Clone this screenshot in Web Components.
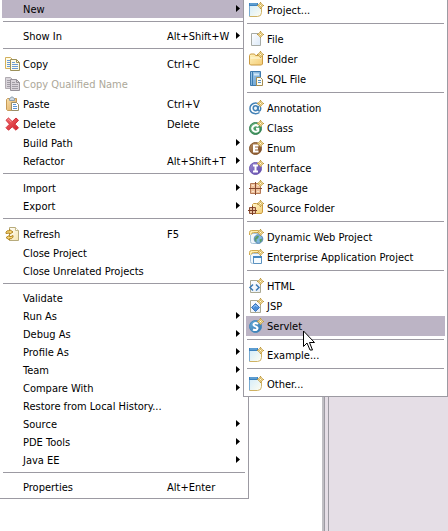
<!DOCTYPE html>
<html lang="en">
<head>
<meta charset="utf-8">
<title>Context menu</title>
<style>
html, body { height: 100%; }
body { margin: 0; overflow: hidden; background: #fff; color: #000; font: 11px/18px "DejaVu Sans Condensed", Tahoma, "Noto Sans", sans-serif; }
</style>
</head>
<body>
<ide-workbench>
  <popup-menu label="Project">
    <menu-entry label="New" submenu active></menu-entry>
    <menu-divider></menu-divider>
    <menu-entry label="Show In" keys="Alt+Shift+W" submenu></menu-entry>
    <menu-divider></menu-divider>
    <menu-entry label="Copy" keys="Ctrl+C" icon="copy"></menu-entry>
    <menu-entry label="Copy Qualified Name" icon="copyOff" disabled></menu-entry>
    <menu-entry label="Paste" keys="Ctrl+V" icon="paste"></menu-entry>
    <menu-entry label="Delete" keys="Delete" icon="delete"></menu-entry>
    <menu-entry label="Build Path" submenu></menu-entry>
    <menu-entry label="Refactor" keys="Alt+Shift+T" submenu></menu-entry>
    <menu-divider></menu-divider>
    <menu-entry label="Import" submenu></menu-entry>
    <menu-entry label="Export" submenu></menu-entry>
    <menu-divider></menu-divider>
    <menu-entry label="Refresh" keys="F5" icon="refresh"></menu-entry>
    <menu-entry label="Close Project"></menu-entry>
    <menu-entry label="Close Unrelated Projects"></menu-entry>
    <menu-divider></menu-divider>
    <menu-entry label="Validate"></menu-entry>
    <menu-entry label="Run As" submenu></menu-entry>
    <menu-entry label="Debug As" submenu></menu-entry>
    <menu-entry label="Profile As" submenu></menu-entry>
    <menu-entry label="Team" submenu></menu-entry>
    <menu-entry label="Compare With" submenu></menu-entry>
    <menu-entry label="Restore from Local History..."></menu-entry>
    <menu-entry label="Source" submenu></menu-entry>
    <menu-entry label="PDE Tools" submenu></menu-entry>
    <menu-entry label="Java EE" submenu></menu-entry>
    <menu-divider></menu-divider>
    <menu-entry label="Properties" keys="Alt+Enter"></menu-entry>
  </popup-menu>
  <popup-menu slot="submenu" label="New" cascade>
    <menu-entry label="Project..." icon="wizard"></menu-entry>
    <menu-divider></menu-divider>
    <menu-entry label="File" icon="file"></menu-entry>
    <menu-entry label="Folder" icon="folder"></menu-entry>
    <menu-entry label="SQL File" icon="sql"></menu-entry>
    <menu-divider></menu-divider>
    <menu-entry label="Annotation" icon="annotation"></menu-entry>
    <menu-entry label="Class" icon="class"></menu-entry>
    <menu-entry label="Enum" icon="enum"></menu-entry>
    <menu-entry label="Interface" icon="interface"></menu-entry>
    <menu-entry label="Package" icon="package"></menu-entry>
    <menu-entry label="Source Folder" icon="source"></menu-entry>
    <menu-divider></menu-divider>
    <menu-entry label="Dynamic Web Project" icon="web"></menu-entry>
    <menu-entry label="Enterprise Application Project" icon="ear"></menu-entry>
    <menu-divider></menu-divider>
    <menu-entry label="HTML" icon="html"></menu-entry>
    <menu-entry label="JSP" icon="jsp"></menu-entry>
    <menu-entry label="Servlet" icon="servlet" active pointer></menu-entry>
    <menu-divider></menu-divider>
    <menu-entry label="Example..." icon="wizard"></menu-entry>
    <menu-divider></menu-divider>
    <menu-entry label="Other..." icon="wizard"></menu-entry>
  </popup-menu>
</ide-workbench>
<script>
const spark = '<path d="M11.5 0v7M8 3.5h7" stroke="#b8923a"/><path d="M11.5.8l2.700 2.700-2.700 2.700L8.800 3.500z" fill="#fff3c4" stroke="#c19a3f"/><path d="M11.500 2v3M10 3.500h3" stroke="#dcbc62"/><path d="M11 3h1v1h-1z" fill="#fffbe8"/>';
const grad = (id, a, b) => `<defs><linearGradient id="${id}" x1="0" y1="0" x2="1" y2="1"><stop offset="0" stop-color="${a}"/><stop offset="1" stop-color="${b}"/></linearGradient></defs>`;
const page = '<path d="M1.500 2.500h7l3 3v9h-10z" fill="url(#g)" stroke="#aaa994"/>';
const disc = (a, b, s) => grad('g', a, b) + `<circle cx="6.500" cy="8.500" r="6" fill="url(#g)" stroke="${s}"/>`;
const bin = '<path d="M1.500 4.500h10v8q0 2-2 2h-6q-2 0-2-2z" fill="#f0f7fc" stroke="#a8c3d9"/><path d="M.5 6V3.500q0-2 2-2h7v2h-5q-2 0-2 2" fill="#ffefb0" stroke="#d0ab4f"/>';
const copy = (a, b, l, f) => `<path d="M.5 1.500h5l3 3v8h-8z" fill="${f}" stroke="${a}"/><path d="M2 4.500h3M2 6.500h3M2 8.500h3M2 10.500h3" stroke="${l}"/><path d="M5.500 3.500h6l3 3v8h-9z" fill="${f}" stroke="${b}"/><path d="M11.500 3.500v3h3" fill="none" stroke="${b}"/><path d="M7 6.500h3M7 8.500h6M7 10.500h6M7 12.500h6" stroke="${l}"/>`;
const ICONS = {
  copy: copy('#d2b05c', '#9c915a', '#6b9bd6', '#fffbe6'),
  copyOff: copy('#b0abb1', '#979299', '#a19da5', '#d9d4da'),
  paste: grad('g', '#f9e0ab', '#dfa95c') + '<path d="M2.500 2.500h9v12h-9l-1-1v-10z" fill="url(#g)" stroke="#c69a57"/><path d="M4.500 4.500v-2l1.500-1q1-1.500 2 0l1.500 1v2z" fill="#cfdae3" stroke="#8c9dac"/><path d="M6.500 6.500h5l2 2v6h-7z" fill="#fff" stroke="#9a8e68"/><path d="M8 8.500h3M8 10.500h4M8 12.500h4" stroke="#5f95d4"/>',
  delete: grad('g', '#f56a6a', '#cf1f2c') + '<path d="M3.500 2L7.200 5.600 11 2l2.500 2.300-3.600 3.900 3.600 3.500L11 14.200l-3.800-3.400-3.700 3.400L1 11.700l3.500-3.500L1 4.300z" fill="url(#g)" stroke="#d0303a" stroke-linejoin="round"/><path d="M2.500 4.200l1-1 3 3" fill="none" stroke="#ff9c9c"/>',
  refresh: grad('g', '#ffffff', '#f6e4ac') + '<path d="M4.500 1.500h6l3 3v10h-9z" fill="url(#g)" stroke="#b7ab7c"/><path d="M10.500 1.500v3h3" fill="#fff" stroke="#c5b988"/><path d="M1 7.500V6.300l1.200-1.500H4.500V3.500L8 6 4.500 8.300V7zM8 9.500v1.600l-1.500 1.600H4.500V14L1 11.600 4.500 9.300v1.200H6z" fill="#f8d676" stroke="#b08320"/>',
  wizard: grad('g', '#d3ecfb', '#fffdf0') + '<path d="M.5 2.500h12v8l-4 4h-8z" fill="url(#g)"/><path d="M.5 2v12.500" stroke="#79abd2"/><path d="M.5 14.500H8.500q4 0 4-4V5" fill="none" stroke="#cfb263"/><path d="M0 1h9v3H0z" fill="#3c82bf"/><path d="M1 2h7" stroke="#7fb8e2"/>' + spark,
  file: grad('g', '#fff', '#dae8f8') + '<path d="M2.500 2.500h7l2 2v10h-9z" fill="url(#g)" stroke="#a7aba6"/>' + spark,
  folder: grad('g', '#fff4bf', '#f4cb74') + '<path d="M.5 13V4.500l1-1.500h4l1 1.500h7V13l-1 1H1.500z" fill="url(#g)" stroke="#cb9b42"/><path d="M1.500 7h11" stroke="#fffbe1"/>' + spark,
  sql: grad('g', '#a4cbea', '#639dcd') + '<path d="M1.500.5h10v14h-10z" fill="url(#g)" stroke="#3d7aae"/><path d="M3.500 1v13" stroke="#3c7cb1"/><path d="M5 2.500h5v2H5z" fill="#d3e9f8"/><path d="M7.500 6.500h4l2 2v6h-6z" fill="#fffef4" stroke="#a58c4f"/><path d="M9 9.500h3M9 11.500h3" stroke="#5b92c8"/>',
  annotation: '<path d="M10.500 12.500C7 15 1 13.500 1 8.500S7 1.500 10 4.500s1.500 8-.8 6V6" fill="none" stroke="#4482b6" stroke-width="1.500"/><ellipse cx="6.500" cy="8.300" rx="2.300" ry="2.500" fill="#eaf5fc" stroke="#4482b6" stroke-width="1.500"/>' + spark,
  class: disc('#6fb886', '#2a8149', '#3a8559') + '<path d="M9.500 6.200Q6.500 4 4.300 6.300t0 4.500q2.500 2 5 0V8.800H7" fill="none" stroke="#fff" stroke-width="2"/>' + spark,
  enum: disc('#b38a5d', '#7d491f', '#89592f') + '<path d="M9.500 5.500H5v6h4.500M5 8.500h4" fill="none" stroke="#fff" stroke-width="2"/>' + spark,
  interface: disc('#9a8ad2', '#5f48a8', '#705bb3') + '<path d="M4 5.500h5M6.500 5.500v6M4 11.500h5" fill="none" stroke="#fff" stroke-width="2"/>' + spark,
  package: '<path d="M1.500 3.500h10v10h-10z" fill="#eec29c" stroke="#b57a58"/><path d="M0 8.500h13M6.500 2v13" stroke="#874a30"/><path d="M3 5.500h2M8 5.500h2M3 11.500h2M8 11.500h2" stroke="#fae3cd"/>' + spark,
  source: grad('g', '#fff5cb', '#f4cf75') + '<path d="M3.500 12V4.500l1-1h3l1 1h5V12l-1 1.500h-9z" fill="url(#g)" stroke="#cb9b42"/><path d="M.5 7.500h6v6h-6z" fill="#eac4a4" stroke="#8b4d32"/><path d="M-1 10.500h9M3.500 6v9" stroke="#7a3b24"/>' + spark,
  web: bin + '<circle cx="9.500" cy="10" r="4.300" fill="#7fb7e0" stroke="#5585b0"/><path d="M6 9q2-3 4-2l-1 2.500-1.500.5v3q-2-1-1.500-3.500M10.500 10.500l2.500-1q.5 2.500-2 4z" fill="#5b9c62"/>' + spark,
  ear: bin + '<path d="M4.500 7.500h8v7h-8z" fill="#f5fbff" stroke="#5b92c0"/><path d="M4 8h9" stroke="#4688c1" stroke-width="2"/>' + spark,
  html: grad('g', '#fff', '#e5eff8') + page + '<path d="M4 6.500L1 9.500l3 3M7 6.500l3 3-3 3" fill="none" stroke="#3c79b4" stroke-width="1.500"/>' + spark,
  jsp: grad('g', '#fff', '#e5eff8') + page + '<path d="M6.500 5.500l4 4-4 4-4-4z" fill="#4b8fd8" stroke="#3c74bb"/><path d="M4.300 9.200L6.500 7l2 2" fill="none" stroke="#a9d3fa"/>' + spark,
  servlet: disc('#68add9', '#2f73ae', '#4389bd') + '<path d="M9 6Q6.500 4.200 5 5.700t1.500 2.700 1.500 2.800-4 .3" fill="none" stroke="#fff" stroke-width="2"/>' + spark
};

class IdeWorkbench extends HTMLElement {
  connectedCallback() {
    this.attachShadow({mode: 'open'}).innerHTML = `<style>
      :host { position: relative; display: grid; min-height: 100vh; grid-template-columns: 322px 3px 3px 1fr; }
      .sash { background: #c0bfc4; border-right: 1px solid #9c9aa2; box-sizing: border-box; }
      .gap, .editor { background: #e5dee6; }
      .editor { border-left: 1px solid #9c9aa2; }
      ::slotted([slot=submenu]) { position: absolute; left: 243px; right: 0; top: 0; }
    </style><main><slot></slot></main><div class="sash"></div><div class="gap"></div><div class="editor"></div><slot name="submenu"></slot>`;
  }
}

class PopupMenu extends HTMLElement {
  connectedCallback() {
    this.attachShadow({mode: 'open'}).innerHTML = `<style>
      :host { display: block; box-sizing: border-box; max-width: 249px; padding: 0 2px 2px; background: #fff; border: solid #9c9aa2; border-width: 0 1px 1px 0; }
      :host([cascade]) { max-width: none; border-left-width: 1px; }
      div { display: flex; flex-direction: column; }
    </style><div role="menu" aria-label="${this.getAttribute('label')}"><slot></slot></div>`;
  }
}

class MenuDivider extends HTMLElement {
  connectedCallback() {
    this.attachShadow({mode: 'open'}).innerHTML = `<style>
      :host { display: block; padding: 3px 1px 5px; }
      hr { margin: 0; border: 0; height: 1px; background: #9c9aa2; }
    </style><hr>`;
  }
}

class MenuEntry extends HTMLElement {
  connectedCallback() {
    const has = n => this.hasAttribute(n);
    const icon = ICONS[this.getAttribute('icon')];
    const keys = this.getAttribute('keys');
    this.attachShadow({mode: 'open'}).innerHTML = `<style>
      :host { display: block; position: relative; }
      button { display: grid; grid-template-columns: 18px 1fr auto 10px; grid-template-rows: 100%; align-items: center; width: 100%; height: 18px; margin: 0; padding: 0 0 0 3px; border: 0; background: none; color: inherit; font: inherit; text-align: left; white-space: nowrap; }
      :host([icon]) button { height: 20px; }
      :host([active]) button { background: #bcb4c5; }
      button:disabled { color: #aca899; }
      span { line-height: 16px; padding-top: 2px; }
      .label { grid-column: 2; }
      .keys { grid-column: 3; width: 69px; }
      .icon { grid-column: 1; width: 16px; height: 16px; overflow: visible; }
      .arrow { grid-column: 4; width: 4px; height: 8px; }
      .pointer { position: absolute; left: 57px; top: 14px; width: 12px; height: 21px; z-index: 1; }
    </style><button type="button" role="menuitem" ${has('disabled') ? 'disabled' : ''} ${has('submenu') ? 'aria-haspopup="menu"' : ''}>
      ${icon ? `<svg class="icon" viewBox="0 0 16 16" fill="none" aria-hidden="true">${icon}</svg>` : ''}
      <span class="label">${this.getAttribute('label')}</span>
      ${keys ? `<span class="keys">${keys}</span>` : ''}
      ${has('submenu') ? '<svg class="arrow" viewBox="0 0 4 8" aria-hidden="true"><path d="M0 0l4 3.500L0 7z"/></svg>' : ''}
    </button>${has('pointer') ? '<svg class="pointer" viewBox="0 0 12 21" aria-hidden="true"><path d="M.5 1v15.500l3.500-3.500 3 7h2.500l-3-7.500h5z" fill="#fff" stroke="#000"/></svg>' : ''}`;
  }
}
customElements.define('ide-workbench', IdeWorkbench);
customElements.define('popup-menu', PopupMenu);
customElements.define('menu-divider', MenuDivider);
customElements.define('menu-entry', MenuEntry);
</script>
</body>
</html>
